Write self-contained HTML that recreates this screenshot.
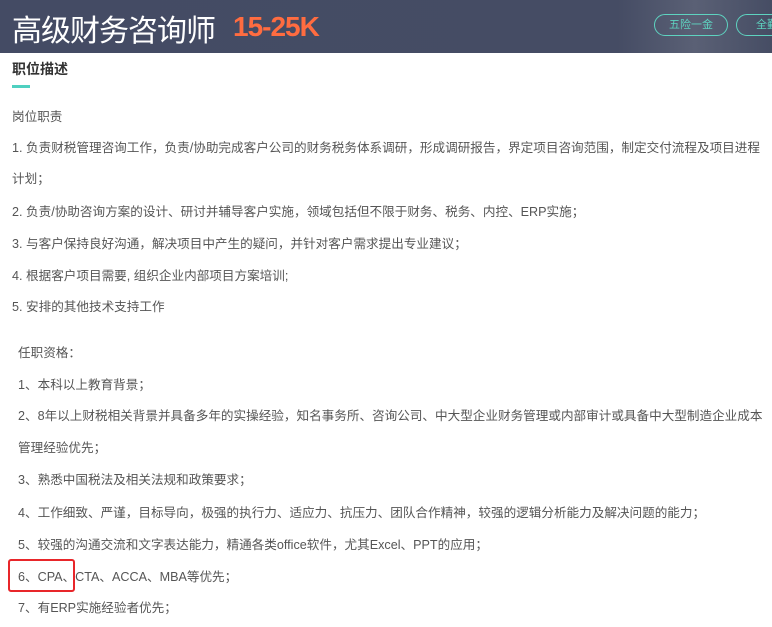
<!DOCTYPE html><html><head><meta charset="utf-8"><style>
body{margin:0;width:772px;height:627px;overflow:hidden;background:#fff;font-family:"Liberation Sans","Noto Sans CJK SC",sans-serif;color:#555;position:relative}
.hd{position:absolute;left:0;top:0;width:772px;height:53px;background:linear-gradient(90deg,#444b64 0%,#454c64 80%,#5a6075 90%,#464d64 100%)}
.t{position:absolute;left:12px;top:6px;font-size:30px;color:#fff;letter-spacing:-1px}
.s{position:absolute;left:233px;top:11px;font-size:28px;font-weight:bold;color:#ff6c40;letter-spacing:-1px}
.tag{position:absolute;top:14px;height:20px;border:1px solid #5ed3c0;border-radius:11px;color:#5ed3c0;font-size:11px;line-height:20px;text-align:center}
.h2{position:absolute;left:12px;top:59px;font-size:14px;font-weight:bold;color:#333}
.bar{position:absolute;left:12px;top:85px;width:18px;height:3px;background:#4fd0c0}
.l{position:absolute;font-size:12.6px;color:#555;white-space:nowrap}
.box{position:absolute;left:8px;top:559px;width:67px;height:33px;border:2px solid #e8262a;border-radius:3px;box-sizing:border-box}
</style></head><body>
<div class="hd"><div class="t">高级财务咨询师</div><div class="s">15-25K</div>
<div class="tag" style="left:654px;width:72px">五险一金</div><div class="tag" style="left:736px;width:60px">全勤</div></div>
<div class="h2">职位描述</div><div class="bar"></div>
<div class="l" style="left:12px;top:106px">岗位职责</div>
<div class="l" style="left:12px;top:137px">1. 负责财税管理咨询工作，负责/协助完成客户公司的财务税务体系调研，形成调研报告，界定项目咨询范围，制定交付流程及项目进程</div>
<div class="l" style="left:12px;top:168px">计划；</div>
<div class="l" style="left:12px;top:201px">2. 负责/协助咨询方案的设计、研讨并辅导客户实施，领域包括但不限于财务、税务、内控、ERP实施；</div>
<div class="l" style="left:12px;top:233px">3. 与客户保持良好沟通，解决项目中产生的疑问，并针对客户需求提出专业建议；</div>
<div class="l" style="left:12px;top:265px">4. 根据客户项目需要, 组织企业内部项目方案培训;</div>
<div class="l" style="left:12px;top:296px">5. 安排的其他技术支持工作</div>
<div class="l" style="left:18px;top:342px">任职资格：</div>
<div class="l" style="left:18px;top:374px">1、本科以上教育背景；</div>
<div class="l" style="left:18px;top:405px">2、8年以上财税相关背景并具备多年的实操经验，知名事务所、咨询公司、中大型企业财务管理或内部审计或具备中大型制造企业成本</div>
<div class="l" style="left:18px;top:437px">管理经验优先；</div>
<div class="l" style="left:18px;top:469px">3、熟悉中国税法及相关法规和政策要求；</div>
<div class="l" style="left:18px;top:502px">4、工作细致、严谨，目标导向，极强的执行力、适应力、抗压力、团队合作精神，较强的逻辑分析能力及解决问题的能力；</div>
<div class="l" style="left:18px;top:534px">5、较强的沟通交流和文字表达能力，精通各类office软件，尤其Excel、PPT的应用；</div>
<div class="l" style="left:18px;top:566px">6、CPA、CTA、ACCA、MBA等优先；</div>
<div class="l" style="left:18px;top:597px">7、有ERP实施经验者优先；</div>
<div class="box"></div>
</body></html>
